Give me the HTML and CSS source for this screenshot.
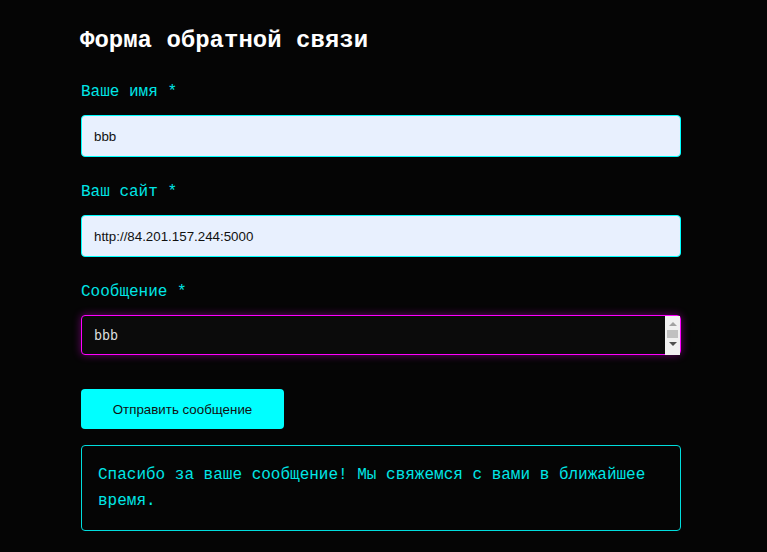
FILE: index.html
```html
<!DOCTYPE html>
<html lang="ru">
<head>
<meta charset="utf-8">
<link rel="stylesheet" href="styles.css">
</head>
<body>
<main class="page">
  <h1 class="title">Форма обратной связи</h1>
  <form class="form">
    <div class="field">
      <label class="label" for="name">Ваше имя *</label>
      <input class="input" id="name" type="text" value="bbb">
    </div>
    <div class="field">
      <label class="label" for="site">Ваш сайт *</label>
      <input class="input" id="site" type="text" value="http://84.201.157.244:5000">
    </div>
    <div class="field">
      <label class="label" for="msg">Сообщение *</label>
      <div class="textarea-wrap">
        <textarea class="textarea" id="msg">bbb</textarea>
        <div class="scrollbar" aria-hidden="true">
          <span class="arrow-up"></span>
          <span class="thumb"></span>
          <span class="arrow-down"></span>
        </div>
      </div>
    </div>
    <button class="button" type="button">Отправить сообщение</button>
  </form>
  <div class="notice">Спасибо за ваше сообщение! Мы свяжемся с вами в ближайшее время.</div>
</main>
</body>
</html>
```
FILE: styles.css
```css
html, body {
  margin: 0;
  padding: 0;
  background: #050505;
}
.page {
  width: 600px;
  margin: 0 0 0 81px;
  padding-top: 27px;
  font-family: "Liberation Mono", monospace;
}
.title {
  margin: 0 0 29px -1px;
  font-size: 24px;
  line-height: 27px;
  font-weight: bold;
  color: #ffffff;
}
.form {
  display: flex;
  flex-direction: column;
}
.field {
  display: flex;
  flex-direction: column;
  margin-bottom: 26px;
}
.field:last-of-type {
  margin-bottom: 34px;
}
.label {
  font-size: 16px;
  line-height: 18px;
  color: #00e6e6;
  margin-bottom: 14px;
}
.input {
  box-sizing: border-box;
  width: 600px;
  height: 42px;
  padding: 0 12px;
  border: 1px solid #00ffff;
  border-radius: 4px;
  background: #e8f0fe;
  color: #111;
  font-family: "Liberation Sans", Arial, sans-serif;
  font-size: 13.33px;
  outline: none;
}
.textarea-wrap {
  position: relative;
  width: 600px;
  height: 40px;
}
.textarea {
  display: block;
  box-sizing: border-box;
  width: 600px;
  height: 40px;
  padding: 11px 28px 11px 12px;
  border: 1px solid #ff00ff;
  border-radius: 4px;
  background: #0b0b0b;
  color: #dddddd;
  font-family: "DejaVu Sans Mono", monospace;
  font-size: 13.33px;
  line-height: 17px;
  resize: none;
  outline: none;
  overflow: hidden;
  box-shadow: 0 0 8px rgba(255, 0, 255, 0.4);
}
.scrollbar {
  position: absolute;
  top: 1px;
  right: 1px;
  bottom: 0;
  width: 15px;
  background: #f1f1f1;
  display: flex;
  flex-direction: column;
  align-items: center;
}
.arrow-up {
  margin-top: 6px;
  width: 0;
  height: 0;
  border-left: 4px solid transparent;
  border-right: 4px solid transparent;
  border-bottom: 4px solid #a3a3a3;
}
.thumb {
  margin-top: 4px;
  width: 11px;
  height: 8px;
  background: #c1c1c1;
}
.arrow-down {
  margin-top: 4px;
  width: 0;
  height: 0;
  border-left: 4px solid transparent;
  border-right: 4px solid transparent;
  border-top: 4px solid #505050;
}
.button {
  align-self: flex-start;
  width: 203px;
  height: 40px;
  border: none;
  border-radius: 4px;
  background: #00ffff;
  color: #111;
  font-family: "Liberation Sans", Arial, sans-serif;
  font-size: 13.33px;
  margin-bottom: 16px;
  padding: 0;
}
.notice {
  box-sizing: border-box;
  width: 600px;
  padding: 16px 16px;
  border: 1px solid #00dddd;
  border-radius: 4px;
  color: #00e6e6;
  font-size: 16px;
  line-height: 26px;
}
```
